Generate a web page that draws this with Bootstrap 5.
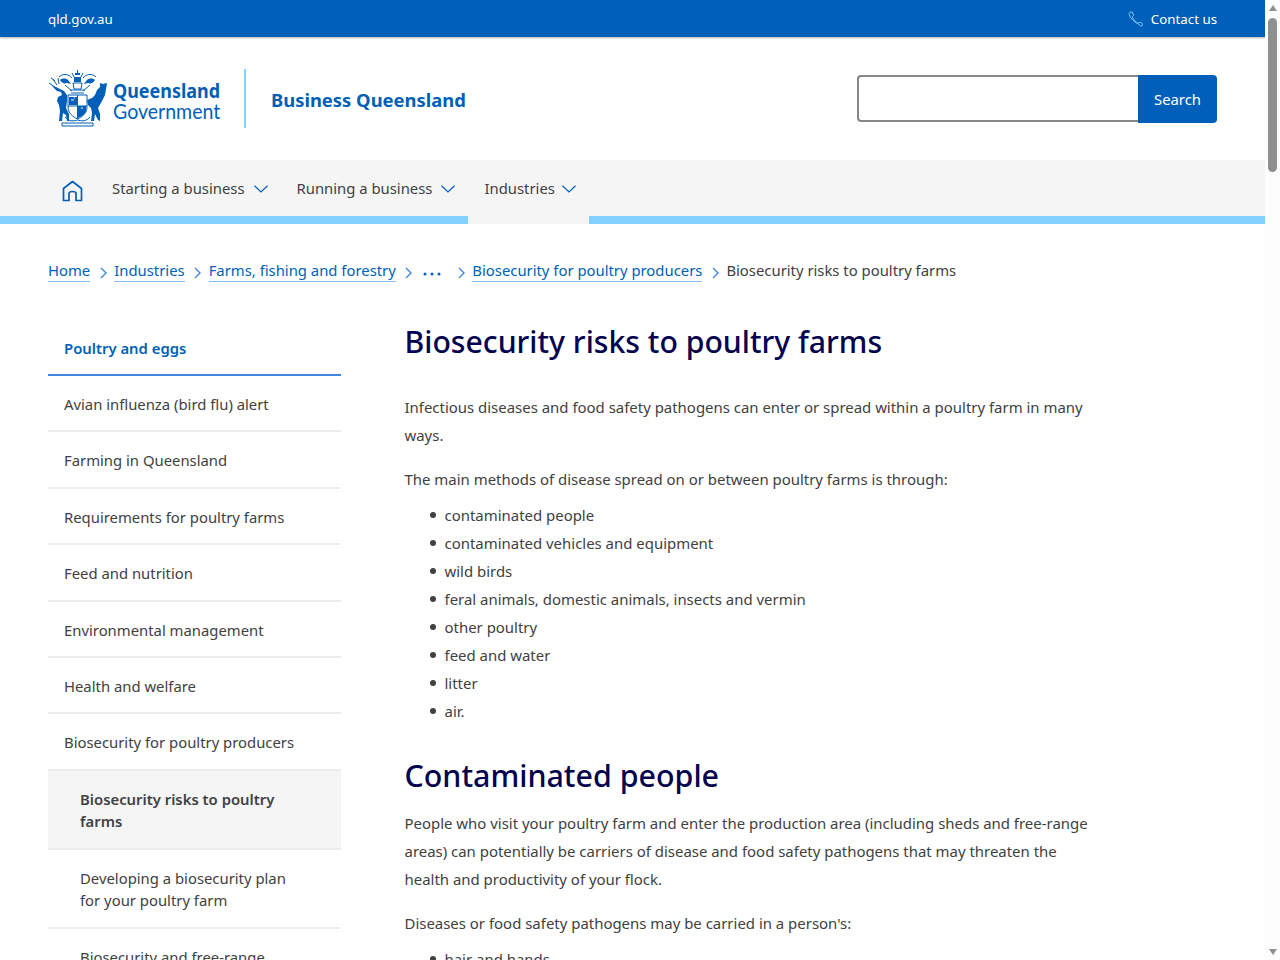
<!DOCTYPE html>
<html lang="en">
<head>
<meta charset="utf-8">
<title>Biosecurity risks to poultry farms</title>
<link href="https://cdn.jsdelivr.net/npm/bootstrap@5.3.0/dist/css/bootstrap.min.css" rel="stylesheet">
<style>
html,body{height:960px;overflow:hidden}
body{font-family:"Noto Sans",sans-serif;font-size:14.85px;color:#414141;background:#fff}
.pagecol{width:1265px;height:960px;overflow:hidden;flex:none}
.fakebar{width:15px;height:960px;background:#fdfdfd;flex:none}
.fb-thumb{width:9px;height:154px;background:#8f8f8f;border-radius:5px;margin:0 auto}
.fb-up{width:0;height:0;border:4.5px solid transparent;border-top:0;border-bottom:6px solid #8f8f8f;margin:5px auto 7px}
.fb-down{width:0;height:0;border:4.5px solid transparent;border-bottom:0;border-top:6px solid #8f8f8f;margin:0 auto 5px}
.topbar{height:37px;background:#005fb8;box-shadow:0 1px 2px rgba(0,0,0,.3);padding:2px 48px 0;font-size:13.3px;position:relative}
.topbar a{color:#fff;text-decoration:none}
.contact{gap:7px}
.contact svg{margin-top:-2px}
.mast{height:123px;padding:0 48px}
.crest{flex:none}
.logotext{margin-left:5px;width:107px;color:#005fb8;line-height:20px;white-space:nowrap;padding-top:4px}
.logotext b{display:block;font-weight:700;font-size:19.5px;transform:scaleX(.92);transform-origin:left center}
.logotext span{display:block;font-family:Lato,sans-serif;font-size:21px;transform:scaleX(.93);transform-origin:left center}
.logo-divider{width:2px;height:59px;background:#84d0ff;margin:0 25px 0 24px}
.site-name{font-weight:700;font-size:18.4px;color:#005fb8;padding-top:2px}
.searchgroup{width:360px;height:48px}
.searchbox{flex:1;min-width:0;border:2px solid #878787;border-right:0;border-radius:4px 0 0 4px;height:47px}
.searchbtn{width:79px;height:48px;background:#005fb8;color:#fff;border:0;border-radius:0 4px 4px 0;font-size:14.85px;padding:1px 0 0}
.mainnav{background:#f5f5f5;height:64px}
.navlead{border-bottom:8px solid #84d0ff;height:64px;padding-left:48px}
.navitem{height:58px;padding:0 13px 0 16px;color:#414141;text-decoration:none;gap:9px}
.navitem svg{flex:none}
.navitem span{margin-top:-1px}
.navhome{padding:4px 0 0 14px;width:48px}
.navactive{height:64px;padding-bottom:6px;padding-right:13px;gap:7px;background:#f5f5f5}
.navrest{flex:1;border-bottom:8px solid #84d0ff;height:64px}
.crumbs{padding:36px 48px 0;height:87px;line-height:20px}
.crumbs a{color:#005fb8;text-decoration:none;border-bottom:1px solid #84bdef;height:22px}
.crumbsep{margin:7px 7.5px 0 9.5px;flex:none}
.crumbdots{margin:11.5px 6.5px 0 2px;flex:none}
.layout{padding:0 48px;gap:63.5px}
.sidenav{width:293px;flex:none}
.sidenav a{display:block;color:#414141;text-decoration:none;padding:17px 16px 15px;line-height:22px;border-bottom:2px solid #ededed;height:56.4px}
.sidenav a.sn-head{color:#005fb8;font-weight:600;border-bottom:2px solid #3f86dd;height:65px;padding-top:26px;padding-bottom:0}
.sidenav a.sn-sub{padding:17px 40px 15px 32px;height:79px}
.sidenav a.sn-cur{background:#f5f5f5;font-weight:600}
.bodycol{width:690px;line-height:28px;font-size:14.95px}
.bodycol h1{font-size:30.2px;line-height:40px;font-weight:500;color:#03034f;margin:11px 0 31px}
.bodycol h2{font-size:30.4px;line-height:40px;font-weight:500;color:#03034f;margin:31px 0 13px}
.bodycol p{margin:0 0 16px}
.bodycol ul{margin:-8px 0 0;padding-left:40px;list-style:none}
.bodycol li{position:relative}
.bodycol li::before{content:"";position:absolute;left:-15px;top:11px;width:6px;height:6px;border-radius:50%;background:#414141}
</style>
</head>
<body class="d-flex">
<div class="pagecol">
  <div class="topbar d-flex align-items-center justify-content-between">
    <a href="#">qld.gov.au</a>
    <a href="#" class="contact d-flex align-items-center">
      <svg width="16" height="16" viewBox="0 0 17 17" fill="none" stroke="#84d0ff" stroke-width="1"><path d="M2 1.500 4.500 1 6 4.500 4.600 6C5.500 8.500 8 11.800 10.300 13 11.500 12 13.500 12 14.500 12.500 16 13.500 15.500 15.800 14 15.800 12.500 15.800 12 15 11.600 14 7.500 12.500 2.500 8 1.300 4 1 3 1.300 2 2 1.500Z"/></svg>
      <span>Contact us</span>
    </a>
  </div>
  <div class="mast d-flex align-items-center justify-content-between">
    <div class="d-flex align-items-center">
      <svg class="crest" width="60" height="58" viewBox="0 0 60 58" aria-hidden="true">
        <g fill="#005fb8">
          <path d="M4 16 9 21 13 22 14 25 10 27 9 31 11 35 12 41 11 51H14L15 43 18 45 19 51H21V44L18 38 19 31 19 25 16 21 12 19 8 17Z"/>
          <path d="M59 13 55 14 52 13 52 17 49 20 47 25 44 28 39 30 40 35 43 38 44 43 43 51H46L47 44 50 50 52 51 52 44 50 38 54 31 57 25 58 19Z"/>
          <path d="M27 5H32V3H27ZM26 7H33V12H26Z"/>
          <path d="M21 27H29V35H21ZM30 36H38V41C38 44 34 46 30 48Z"/>
          <path d="M12 10C14 8 18 8 20 10L23 14 19 13C16 14 14 13 12 10ZM47 10C45 8 41 8 39 10L36 14 40 13C43 14 45 13 47 10Z"/>
        </g>
        <g fill="none" stroke="#005fb8" stroke-width="1">
          <path d="M20 25H39V37C39 43 34 47 29.500 49 25 47 20 43 20 37Z"/>
          <path d="M29.500 25V49M20 36H39"/>
          <path d="M29.500 0V3M24 3 26 7M35 3 33 7M25 13H34L33 19H26ZM22 20H37M23 23H36"/>
          <path d="M11 7C15 3 21 4 24 8M48 7C44 3 38 4 35 8M17 15 24 21M42 15 35 21"/>
          <path d="M5 9 9 15M1 13 7 17M10 8 11 14M3 8 7 11"/>
          <path d="M17 47C21 52 26 51 29.500 50 33 51 38 52 42 47"/>
          <path d="M14 53H45V56H14Z"/>
        </g>
        <path d="M26 28H27M23 30H26M33 38H35" stroke="#fff" stroke-width="1" fill="none"/>
      </svg>
      <div class="logotext"><b>Queensland</b><span>Government</span></div>
      <div class="logo-divider"></div>
      <div class="site-name">Business Queensland</div>
    </div>
    <div class="searchgroup d-flex">
      <input class="searchbox" type="text" aria-label="Search">
      <button class="searchbtn" type="button">Search</button>
    </div>
  </div>
  <nav class="mainnav d-flex">
    <div class="navlead d-flex align-items-start">
      <a href="#" class="navitem navhome d-flex align-items-center" aria-label="Home">
        <svg width="21" height="22" viewBox="0 0 21 22" fill="none" stroke="#005fb8" stroke-width="1.700" stroke-linejoin="round"><path d="M1.500 20.500V8.500L10.500 1.500 19.500 8.500V20.500H14V13.500C14 10.800 7 10.800 7 13.500V20.500Z"/></svg>
      </a>
      <a href="#" class="navitem d-flex align-items-center"><span>Starting a business</span><svg width="14" height="8" viewBox="0 0 14 8" fill="none" stroke="#005fb8" stroke-width="1.200"><path d="M.5.700 7 7 13.500.700"/></svg></a>
      <a href="#" class="navitem d-flex align-items-center"><span>Running a business</span><svg width="14" height="8" viewBox="0 0 14 8" fill="none" stroke="#005fb8" stroke-width="1.200"><path d="M.5.700 7 7 13.500.700"/></svg></a>
    </div>
    <a href="#" class="navitem navactive d-flex align-items-center"><span>Industries</span><svg width="14" height="8" viewBox="0 0 14 8" fill="none" stroke="#005fb8" stroke-width="1.200"><path d="M.5.700 7 7 13.500.700"/></svg></a>
    <div class="navrest"></div>
  </nav>
  <div class="crumbs d-flex align-items-start">
    <a href="#">Home</a>
    <svg class="crumbsep" width="7" height="12" viewBox="0 0 7 12" fill="none" stroke="#3f86dd" stroke-width="1.400"><path d="M1 1 6 6 1 11"/></svg>
    <a href="#">Industries</a>
    <svg class="crumbsep" width="7" height="12" viewBox="0 0 7 12" fill="none" stroke="#3f86dd" stroke-width="1.400"><path d="M1 1 6 6 1 11"/></svg>
    <a href="#">Farms, fishing and forestry</a>
    <svg class="crumbsep" width="7" height="12" viewBox="0 0 7 12" fill="none" stroke="#3f86dd" stroke-width="1.400"><path d="M1 1 6 6 1 11"/></svg>
    <svg class="crumbdots" width="20" height="4" viewBox="0 0 20 4" fill="#005fb8"><circle cx="3" cy="2" r="1.500"/><circle cx="10" cy="2" r="1.500"/><circle cx="17" cy="2" r="1.500"/></svg>
    <svg class="crumbsep" width="7" height="12" viewBox="0 0 7 12" fill="none" stroke="#3f86dd" stroke-width="1.400"><path d="M1 1 6 6 1 11"/></svg>
    <a href="#">Biosecurity for poultry producers</a>
    <svg class="crumbsep" width="7" height="12" viewBox="0 0 7 12" fill="none" stroke="#3f86dd" stroke-width="1.400"><path d="M1 1 6 6 1 11"/></svg>
    <span>Biosecurity risks to poultry farms</span>
  </div>
  <div class="layout d-flex align-items-start">
    <nav class="sidenav">
      <a href="#" class="sn-head">Poultry and eggs</a>
      <a href="#">Avian influenza (bird flu) alert</a>
      <a href="#">Farming in Queensland</a>
      <a href="#">Requirements for poultry farms</a>
      <a href="#">Feed and nutrition</a>
      <a href="#">Environmental management</a>
      <a href="#">Health and welfare</a>
      <a href="#">Biosecurity for poultry producers</a>
      <a href="#" class="sn-sub sn-cur">Biosecurity risks to poultry farms</a>
      <a href="#" class="sn-sub">Developing a biosecurity plan for your poultry farm</a>
      <a href="#" class="sn-sub">Biosecurity and free-range</a>
    </nav>
    <main class="bodycol">
      <h1>Biosecurity risks to poultry farms</h1>
      <p>Infectious diseases and food safety pathogens can enter or spread within a poultry farm in many ways.</p>
      <p>The main methods of disease spread on or between poultry farms is through:</p>
      <ul>
        <li>contaminated people</li>
        <li>contaminated vehicles and equipment</li>
        <li>wild birds</li>
        <li>feral animals, domestic animals, insects and vermin</li>
        <li>other poultry</li>
        <li>feed and water</li>
        <li>litter</li>
        <li>air.</li>
      </ul>
      <h2>Contaminated people</h2>
      <p>People who visit your poultry farm and enter the production area (including sheds and free-range areas) can potentially be carriers of disease and food safety pathogens that may threaten the health and productivity of your flock.</p>
      <p>Diseases or food safety pathogens may be carried in a person's:</p>
      <ul>
        <li>hair and hands</li>
      </ul>
    </main>
  </div>
</div>
<aside class="fakebar d-flex flex-column">
  <div class="fb-up"></div>
  <div class="fb-thumb"></div>
  <div class="flex-grow-1"></div>
  <div class="fb-down"></div>
</aside>
<script src="https://cdn.jsdelivr.net/npm/bootstrap@5.3.0/dist/js/bootstrap.bundle.min.js"></script>
</body>
</html>
